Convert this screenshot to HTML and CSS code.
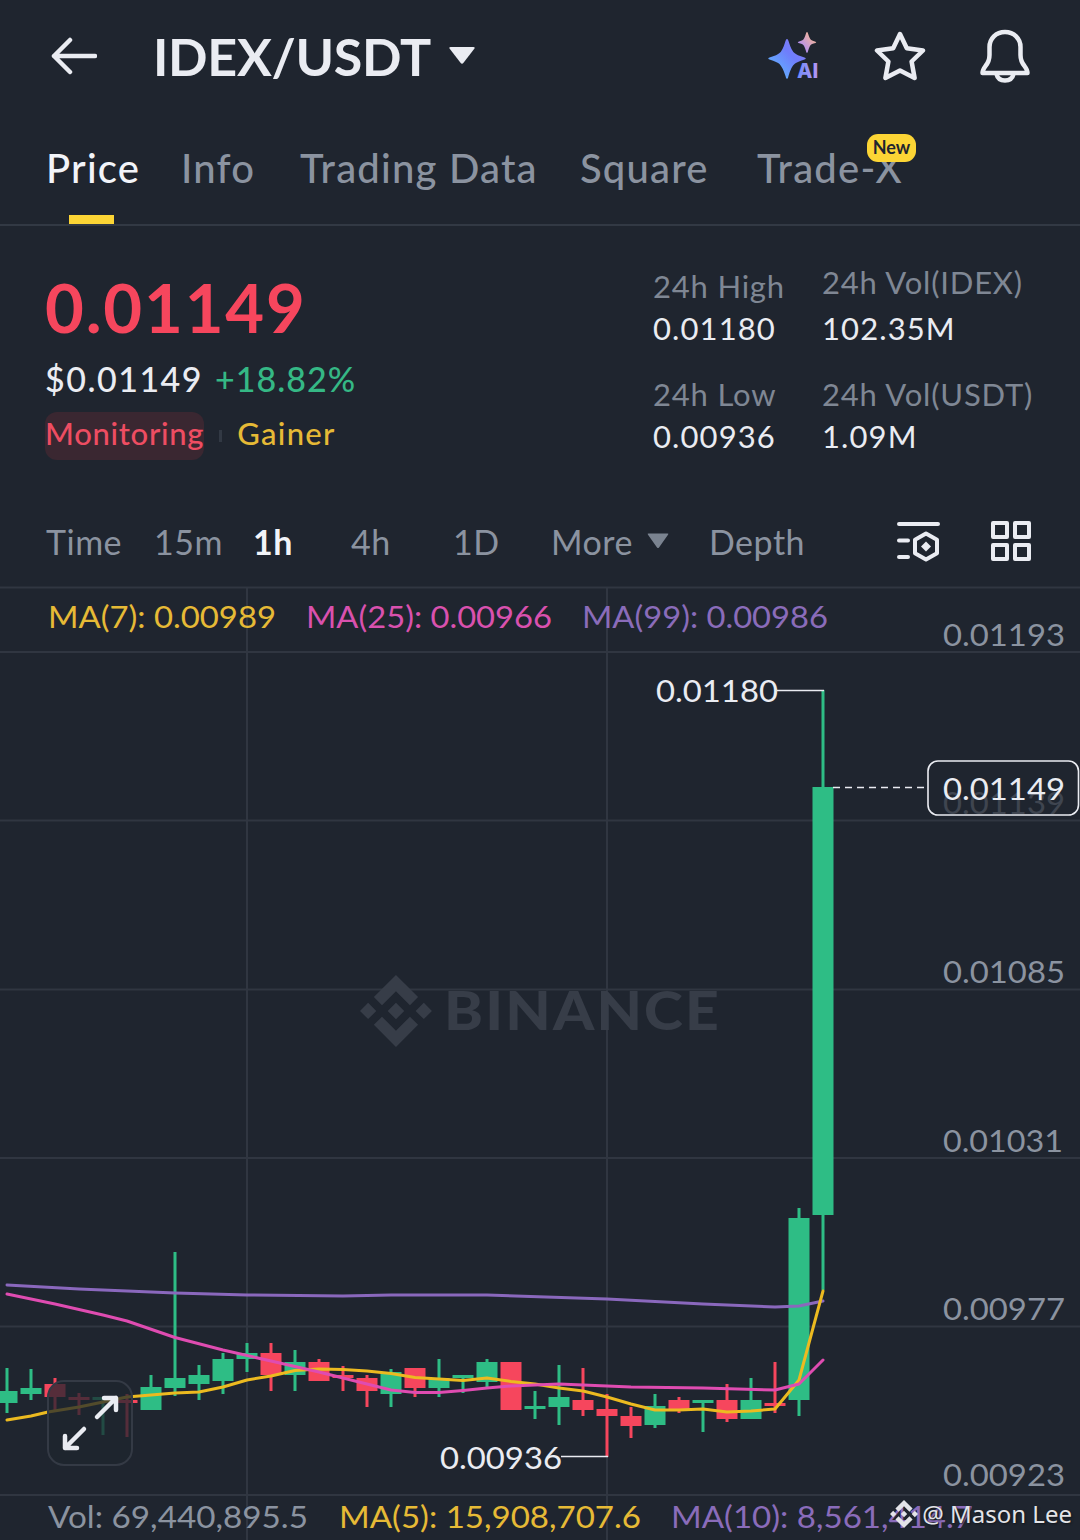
FILE: index.html
```
<!DOCTYPE html>
<html lang="en">

<head>
    <meta charset="utf-8">
    <title>IDEX/USDT</title>
    <meta name="viewport" content="width=device-width, initial-scale=1">
    <link rel="stylesheet" href="styles.css">
</head>

<body>
    <header class="topbar">
        <svg class="back" width="48" height="40" viewBox="0 0 48 40">
            <path d="M21 4 5 20l16 16M5 20h41" />
        </svg>
        <h1>IDEX/USDT</h1>
        <svg class="caret" width="28" height="20" viewBox="0 0 28 20">
            <path d="M2.500 1h23q2 0 .8 1.800L15.500 16.800q-1.500 1.700-3 0L1.700 2.800Q.5 1 2.500 1z" />
        </svg>
        <div class="actions">
            <svg class="spark" width="54" height="50" viewBox="0 0 54 50">
                <defs>
                    <linearGradient id="blue" x1="0" y1="1" x2="1" y2="0">
                        <stop offset="0" stop-color="#5cc3ff" />
                        <stop offset=".6" stop-color="#6f7dfb" />
                        <stop offset="1" stop-color="#8c7cf5" />
                    </linearGradient>
                    <linearGradient id="peach" x1="0" y1="1" x2="1" y2="0">
                        <stop offset=".2" stop-color="#b08df5" />
                        <stop offset=".8" stop-color="#f0b39c" />
                    </linearGradient>
                    <linearGradient id="violet">
                        <stop offset="0" stop-color="#6f8bfb" />
                        <stop offset="1" stop-color="#b596f3" />
                    </linearGradient>
                </defs>
                <path fill="url(#blue)" d="M20 8q1 0 1.500 2 3 10 6 12 2 2 10 4.500 2.500 1 0 2-8 2.500-10 4.500-3 2-6 12Q21 48 20 48t-1.500-3q-3-9-6-12-2-2-10-4.500-2.500-1 0-2 8-2.500 10-4.500 3-2 6-12Q19 8 20 8z" />
                <path fill="url(#peach)" d="M40 1q.8 0 1.200 2 1.500 5 3 6 1 .8 4.300 1.700 1.500.6 0 1.200-3.300.9-4.300 1.700-1.500 1-3 6Q40.800 22 40 22t-1.200-2.400q-1.500-5-3-6-1-.8-4.300-1.700-1.500-.6 0-1.200 3.300-.9 4.300-1.700 1.500-1 3-6Q39.200 1 40 1z" />
                <text class="ai" x="30" y="47" fill="url(#violet)">AI</text>
            </svg>
            <svg class="outline" width="52" height="52" viewBox="0 0 52 52">
                <path d="M26 4l6.800 14.200L49 20.500 37.600 31.500 40.600 48 26 40.500 11.400 48l3-16.500L3 20.500l16.200-2.300z" />
            </svg>
            <svg class="outline" width="52" height="54" viewBox="0 0 52 54">
                <path d="M26 3C17 3 10.500 9.500 10.500 18v8c0 5-1.500 8-4 11Q3.500 41 3.500 44h45q0-3-3-7c-2.500-3-4-6-4-11v-8C41.500 9.500 35 3 26 3z" />
                <path d="M17.500 45c1 4.500 4.500 6.500 8.500 6.500s7.500-2 8.500-6.500" />
            </svg>
        </div>
    </header>

    <nav class="tabs">
        <a class="active">Price</a>
        <a>Info</a>
        <a>Trading Data</a>
        <a>Square</a>
        <a>Trade-X<span class="badge">New</span></a>
    </nav>

    <section class="summary">
        <div class="quote">
            <div class="last">0.01149</div>
            <div class="sub"><span class="usd">$0.01149</span><span class="up">+18.82%</span></div>
            <div class="tags">
                <span class="monitoring">Monitoring</span>
                <i></i>
                <span class="gainer">Gainer</span>
            </div>
        </div>
        <dl class="stats">
            <div>
                <dt>24h High</dt>
                <dd>0.01180</dd>
            </div>
            <div>
                <dt class="raised">24h Vol(IDEX)</dt>
                <dd>102.35M</dd>
            </div>
            <div>
                <dt>24h Low</dt>
                <dd>0.00936</dd>
            </div>
            <div>
                <dt>24h Vol(USDT)</dt>
                <dd>1.09M</dd>
            </div>
        </dl>
    </section>

    <nav class="intervals">
        <a>Time</a>
        <a>15m</a>
        <a class="active">1h</a>
        <a>4h</a>
        <a>1D</a>
        <a>More<svg width="22" height="16" viewBox="0 0 22 16">
                <path d="M1.500.5h19q1.500 0 .5 1.300L12 14.500q-1 1.200-2 0L1 1.800Q0 .5 1.500.5z" />
            </svg></a>
        <a>Depth</a>
        <svg class="outline" width="46" height="44" viewBox="0 0 46 44">
            <path d="M3 5h39M3 21.500h9M3 38h9M30 14.500l11 6.300v13.400l-11 6.300-11-6.300V20.800z" />
            <path class="solid" d="M30 22.500l5 5-5 5-5-5z" />
        </svg>
        <svg class="outline" width="42" height="44" viewBox="0 0 42 44">
            <path d="M3 4h14v14H3zM25 4h14v14H25zM3 26h14v14H3zM25 26h14v14H25z" />
        </svg>
    </nav>

    <main class="chart">
        <svg width="1080" height="954" viewBox="0 586 1080 954">
            <g class="grid">
                <path d="M0 587.500H1080M0 652H1080M0 820.500H1080M0 989.500H1080M0 1158H1080M0 1326.500H1080M0 1495H1080" />
                <path d="M247 587V1540M607 587V1540" />
            </g>

            <g class="watermark">
                <path transform="translate(360 975) scale(.568)" d="M38.730 53.200l24.590-24.580 24.600 24.600 14.300-14.310L63.320 0 24.420 38.890zM0 63.310l14.300-14.310 14.310 14.310-14.310 14.300zM38.730 73.410l24.590 24.590 24.600-24.600 14.310 14.290-38.900 38.910-38.910-38.880zM98 63.310l14.300-14.310 14.310 14.300-14.310 14.320zM77.830 63.300L63.320 48.780 48.800 63.300l14.520 14.500z" />
                <text x="444" y="1030" textLength="277" lengthAdjust="spacingAndGlyphs">BINANCE</text>
            </g>

            <g class="axis">
                <text x="943" y="646" textLength="122" lengthAdjust="spacingAndGlyphs">0.01193</text>
                <text class="ghost" x="943" y="814" textLength="122" lengthAdjust="spacingAndGlyphs">0.01139</text>
                <text x="943" y="983" textLength="122" lengthAdjust="spacingAndGlyphs">0.01085</text>
                <text x="943" y="1152" textLength="120" lengthAdjust="spacingAndGlyphs">0.01031</text>
                <text x="943" y="1320" textLength="122" lengthAdjust="spacingAndGlyphs">0.00977</text>
                <text x="943" y="1486" textLength="122" lengthAdjust="spacingAndGlyphs">0.00923</text>
            </g>

            <g id="candles"></g>

            <path class="line ma99" d="M7 1285L79 1289 127 1291 175 1293 247 1295 343 1296 391 1295 487 1295 607 1299 703 1304 775 1307 799 1306 823 1301" />
            <path class="line ma7" d="M7 1420L31 1416 48 1412 79 1407 127 1397 151 1395 175 1393 199 1392 223 1387 247 1380 271 1376 295 1370.500 319 1369 343 1369.500 367 1371 391 1373.500 415 1377.500 439 1379 463 1380.500 487 1378 511 1381.500 535 1384 559 1388 583 1391 607 1397 631 1404 655 1410 679 1410 703 1409 727 1412 751 1411 775 1409 799 1380 823 1291" />
            <path class="line ma25" d="M7 1294L55 1304 103 1315 127 1321 175 1337.500 223 1350 271 1361 319 1372 343 1378 367 1384 391 1390 415 1392.500 439 1392.500 463 1390.500 487 1388 511 1386 535 1385 559 1384 583 1385 631 1387 703 1388 775 1390 799 1384 823 1360" />

            <g class="marks">
                <path d="M777 690.500H824M561 1456.500H608" />
                <path stroke-dasharray="7 5" d="M833 787.500H924" />
                <rect x="928" y="761" width="150.500" height="54" rx="10" />
                <text x="656" y="702" textLength="122" lengthAdjust="spacingAndGlyphs">0.01180</text>
                <text x="440" y="1469" textLength="122" lengthAdjust="spacingAndGlyphs">0.00936</text>
                <text x="943" y="800" textLength="122" lengthAdjust="spacingAndGlyphs">0.01149</text>
            </g>

            <g class="legend">
                <text class="ma7" x="48" y="628" textLength="228" lengthAdjust="spacingAndGlyphs">MA(7): 0.00989</text>
                <text class="ma25" x="306" y="628" textLength="246" lengthAdjust="spacingAndGlyphs">MA(25): 0.00966</text>
                <text class="ma99" x="582" y="628" textLength="246" lengthAdjust="spacingAndGlyphs">MA(99): 0.00986</text>
                <text class="vol" x="48" y="1528" textLength="260" lengthAdjust="spacingAndGlyphs">Vol: 69,440,895.5</text>
                <text class="ma7" x="339" y="1528" textLength="302" lengthAdjust="spacingAndGlyphs">MA(5): 15,908,707.6</text>
                <text class="ma99" x="671" y="1528" textLength="302" lengthAdjust="spacingAndGlyphs">MA(10): 8,561,414.7</text>
            </g>
        </svg>

        <button class="expand">
            <svg width="60" height="60" viewBox="0 0 60 60">
                <path d="M37 24L56 5M44 5h12v12M24 36L5 55M5 43v12h12" />
            </svg>
        </button>

        <div class="author">
            <svg width="28" height="28" viewBox="0 0 126.610 126.610">
                <path d="M38.730 53.200l24.590-24.580 24.600 24.600 14.300-14.310L63.320 0 24.420 38.890zM0 63.310l14.300-14.310 14.310 14.310-14.310 14.300zM38.730 73.410l24.590 24.590 24.600-24.600 14.310 14.290-38.900 38.910-38.910-38.880zM98 63.310l14.300-14.310 14.310 14.300-14.310 14.320zM77.830 63.300L63.320 48.780 48.800 63.300l14.520 14.500z" />
            </svg>
            <span>@ Mason Lee</span>
        </div>
    </main>

    <script>
        // direction, wick top, body top, body bottom, wick bottom
        var candles = [
            ['up', 1368, 1391, 1403, 1413],
            ['up', 1369, 1388, 1394, 1400],
            ['down', 1378, 1384, 1397, 1412],
            ['down', 1393, 1397, 1400, 1415],
            ['up', 1397, 1397, 1400, 1435],
            ['down', 1394, 1400, 1403, 1437],
            ['up', 1375, 1387, 1410, 1410],
            ['up', 1252, 1378, 1388, 1396],
            ['up', 1365, 1375, 1384, 1400],
            ['up', 1353, 1359, 1381, 1394],
            ['up', 1343, 1353, 1359, 1372],
            ['down', 1343, 1353, 1375, 1391],
            ['up', 1350, 1362, 1375, 1391],
            ['down', 1359, 1362, 1381, 1381],
            ['down', 1366, 1375, 1378, 1391],
            ['down', 1375, 1378, 1391, 1407],
            ['up', 1369, 1372, 1394, 1407],
            ['down', 1368, 1368, 1388, 1397],
            ['up', 1359, 1378, 1388, 1397],
            ['up', 1375, 1375, 1378, 1393],
            ['up', 1359, 1362, 1382, 1388],
            ['down', 1362, 1362, 1410, 1410],
            ['up', 1391, 1406, 1409, 1419],
            ['up', 1365, 1397, 1407, 1425],
            ['down', 1368, 1400, 1410, 1416],
            ['down', 1394, 1409, 1416, 1457],
            ['down', 1407, 1416, 1426, 1438],
            ['up', 1394, 1406, 1425, 1428],
            ['down', 1397, 1400, 1410, 1413],
            ['up', 1400, 1400, 1403, 1432],
            ['down', 1384, 1400, 1419, 1422],
            ['up', 1378, 1400, 1419, 1419],
            ['down', 1362, 1403, 1406, 1413],
            ['up', 1208, 1218, 1400, 1416],
            ['up', 690, 787, 1215, 1290]
        ];
        var html = '';
        candles.forEach((c, i) => {
            let x = 7 + i * 24;
            html += `<path class="${c[0]}" d="M${x - 10.5} ${c[2]}h21V${c[3]}h-21zM${x - 1.5} ${c[1]}h3V${c[4]}h-3z" />`;
        });
        document.getElementById('candles').innerHTML = html;
    </script>
</body>

</html>
```

FILE: styles.css
```
* {
    box-sizing: border-box;
}

body {
    margin: 0;
    width: 1080px;
    height: 1540px;
    overflow: hidden;
    background-color: #1f252f;
    color: #eaecf2;
    font-family: Lato, "Liberation Sans", sans-serif;
}

svg {
    display: block;
}

.topbar {
    display: flex;
    align-items: center;
    height: 112px;
    padding-left: 49px;
}

.topbar h1 {
    margin: 0 17px 1px 56px;
    font-size: 52px;
    font-weight: 700;
    line-height: 60px;
    letter-spacing: -.3px;
}

.back {
    fill: none;
    stroke: #eaecf2;
    stroke-width: 4.5;
    stroke-linecap: round;
    stroke-linejoin: round;
}

.caret {
    fill: #eaecf2;
}

.actions {
    display: flex;
    align-items: center;
    gap: 53px;
    margin-left: auto;
    padding-right: 49px;
}

.spark {
    overflow: visible;
}

.ai {
    font-family: Inter, sans-serif;
    font-size: 20px;
    font-weight: 800;
}

.outline {
    fill: none;
    stroke: #eaecf2;
    stroke-width: 4.5;
    stroke-linejoin: round;
    stroke-linecap: round;
}

.outline .solid {
    fill: #eaecf2;
    stroke: none;
}

.tabs {
    display: grid;
    grid-template-columns: 135px 119px 280px 177px max-content;
    height: 114px;
    padding: 30px 0 0 46px;
    border-bottom: 2px solid #323944;
    color: #8b93a0;
    font-size: 40px;
    font-weight: 500;
    line-height: 52px;
    letter-spacing: 1.2px;
}

.tabs a {
    position: relative;
}

.tabs .active {
    color: #f2f4f9;
}

.tabs .active::after {
    content: "";
    position: absolute;
    left: 23px;
    bottom: 0;
    width: 45px;
    height: 9px;
    background-color: #fcd535;
}

.badge {
    position: absolute;
    top: -8px;
    left: 110px;
    width: 49px;
    height: 28px;
    border-radius: 11px;
    background-color: #fcd535;
    color: #1f252f;
    font-size: 18px;
    font-weight: 700;
    line-height: 27px;
    letter-spacing: 0;
    text-align: center;
}

.summary {
    display: flex;
    justify-content: space-between;
    height: 274px;
    padding: 39px 0 0 45px;
}

.last {
    color: #f6465d;
    font-size: 67px;
    font-weight: 700;
    line-height: 84px;
    letter-spacing: 1.8px;
}

.sub {
    display: flex;
    gap: 12px;
    margin-top: 9px;
    font-size: 34px;
    font-weight: 500;
    line-height: 42px;
}

.usd {
    letter-spacing: 1.5px;
}

.up {
    color: #35b885;
    letter-spacing: 1px;
}

.tags {
    display: flex;
    align-items: center;
    margin-top: 12px;
    font-size: 31px;
    font-weight: 500;
    line-height: 42px;
}

.tags span {
    height: 48px;
}

.monitoring {
    border-radius: 12px;
    background-color: #3a2731;
    color: #ee4d62;
    letter-spacing: .7px;
}

.tags i {
    width: 3px;
    height: 12px;
    margin: 0 15px;
    background-color: #323944;
}

.gainer {
    color: #e6ba36;
    letter-spacing: 1.3px;
}

.stats {
    display: grid;
    grid-template-columns: 169px 258px;
    grid-auto-rows: 108px;
    margin: 0;
    font-size: 31px;
}

.stats dt {
    color: #7f8794;
    line-height: 42px;
    letter-spacing: .8px;
}

.stats .raised {
    margin: -4px 0 4px;
}

.stats dd {
    margin: 0;
    line-height: 42px;
    letter-spacing: 1.1px;
}

.intervals {
    display: grid;
    grid-template-columns: 108px 99px 98px 102px 98px 158px 187px 94px 60px;
    align-items: center;
    height: 86px;
    padding: 0 0 4px 46px;
    color: #8b93a0;
    font-size: 34px;
    letter-spacing: .5px;
}

.intervals a {
    display: flex;
    align-items: center;
    gap: 14px;
}

.intervals a svg {
    fill: #7a8390;
}

.intervals .active {
    color: #f2f4f9;
    font-weight: 700;
}

.intervals .outline {
    stroke-width: 4;
}

.chart {
    position: relative;
    height: 954px;
}

.chart text {
    font-size: 31px;
}

.grid {
    fill: none;
    stroke: #303641;
    stroke-width: 2;
}

.watermark {
    fill: #373d48;
}

.chart .watermark text {
    font-size: 54px;
    font-weight: 900;
    letter-spacing: 2px;
}

.axis {
    fill: #8b93a0;
}

.ghost {
    fill: #3f4550;
}

#candles .up {
    fill: #2ebd85;
}

#candles .down {
    fill: #f6465d;
}

.line {
    fill: none;
    stroke-width: 3;
    stroke-linecap: round;
    stroke-linejoin: round;
}

.line.ma7 {
    stroke: #ecba20;
}

.line.ma25 {
    stroke: #df4cb1;
}

.line.ma99 {
    stroke: #8a68bd;
}

.marks {
    fill: #eaecf2;
}

.marks path,
.marks rect {
    fill: none;
    stroke: #eaecf2;
    stroke-width: 1.6;
}

.legend .ma7 {
    fill: #e6ba36;
}

.legend .ma25 {
    fill: #d951ae;
}

.legend .ma99 {
    fill: #8a6cba;
}

.legend .vol {
    fill: #8b93a0;
}

.expand {
    position: absolute;
    left: 47px;
    top: 794px;
    width: 86px;
    height: 86px;
    padding: 11px;
    border: 2px solid #343a45;
    border-radius: 17px;
    background-color: rgba(31, 37, 47, .75);
}

.expand path {
    fill: none;
    stroke: #eaecf2;
    stroke-width: 4.5;
    stroke-linecap: round;
    stroke-linejoin: round;
}

.author {
    position: absolute;
    right: 8px;
    bottom: 9px;
    display: flex;
    align-items: center;
    gap: 4px;
    color: #e3e4e8;
    font-family: "Noto Sans", sans-serif;
    font-size: 24px;
    line-height: 34px;
    text-shadow: 1px 1px 2px #11151b;
}

.author svg {
    fill: #e3e4e8;
}
```
